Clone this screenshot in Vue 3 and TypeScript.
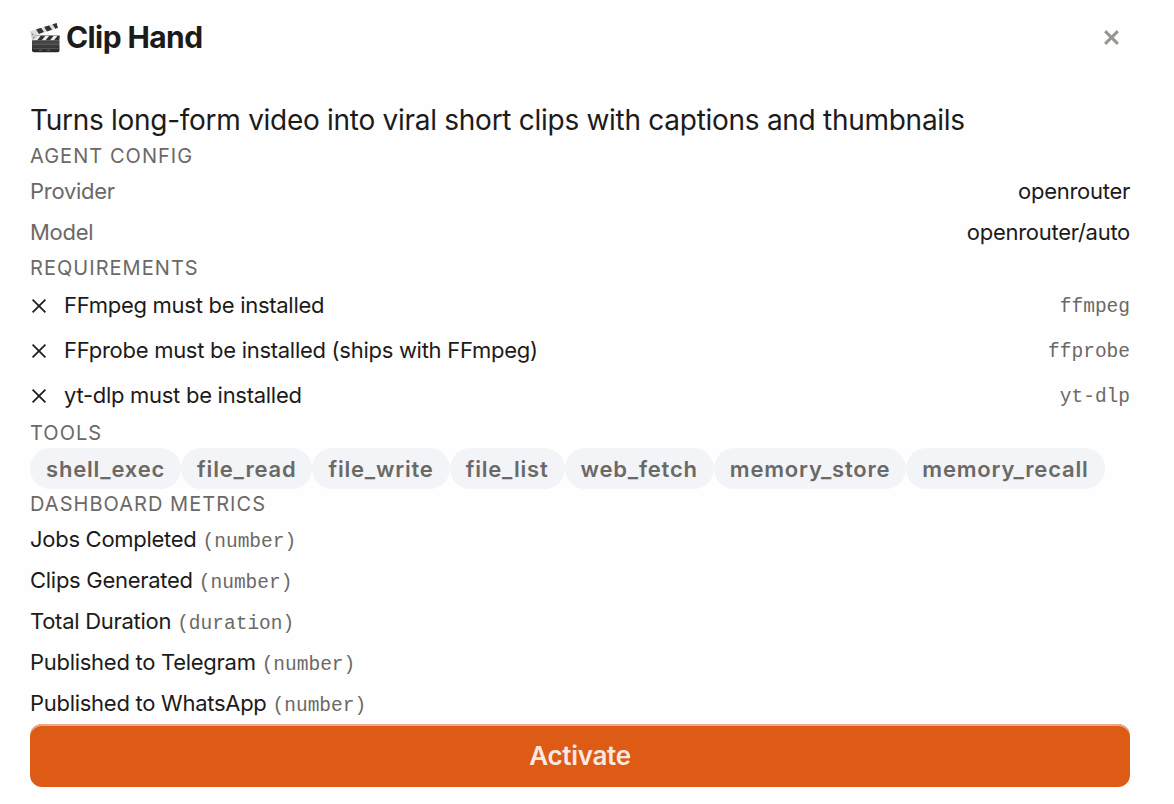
<script setup lang="ts">
interface ConfigRow { label: string; value: string }
interface Requirement { label: string; binary: string }
interface Metric { label: string; format: string }

const config: ConfigRow[] = [
  { label: 'Provider', value: 'openrouter' },
  { label: 'Model', value: 'openrouter/auto' },
]

const requirements: Requirement[] = [
  { label: 'FFmpeg must be installed', binary: 'ffmpeg' },
  { label: 'FFprobe must be installed (ships with FFmpeg)', binary: 'ffprobe' },
  { label: 'yt-dlp must be installed', binary: 'yt-dlp' },
]

const tools: string[] = [
  'shell_exec', 'file_read', 'file_write', 'file_list',
  'web_fetch', 'memory_store', 'memory_recall',
]

const metrics: Metric[] = [
  { label: 'Jobs Completed', format: 'number' },
  { label: 'Clips Generated', format: 'number' },
  { label: 'Total Duration', format: 'duration' },
  { label: 'Published to Telegram', format: 'number' },
  { label: 'Published to WhatsApp', format: 'number' },
]
</script>

<template>
  <main class="modal">
    <header class="header">
      <h1 class="title">
        <svg class="clapper" viewBox="1 0 32 32" aria-hidden="true">
          <defs>
            <linearGradient id="slate" x1="0" y1="0" x2="0" y2="1">
              <stop offset="0" stop-color="#2b2b2b" />
              <stop offset="0.45" stop-color="#484848" />
              <stop offset="1" stop-color="#252525" />
            </linearGradient>
            <clipPath id="arm"><path d="M1.2 9.3 27.6 1l1.3 5L3.2 14.4z" /></clipPath>
            <clipPath id="bar"><path d="M3 13.5h27.5v5H3z" /></clipPath>
          </defs>
          <path d="M3 13.5h27.5v14.7q0 2-2 2H5q-2 0-2-2z" fill="url(#slate)" />
          <path d="M4 22.3h25.5M4 26.5h25.5" stroke="#6c6c6c" stroke-width=".6" />
          <path d="M10 28.3h3M18 28.3h3" stroke="#929292" stroke-width=".6" />
          <g clip-path="url(#arm)">
            <path d="M0 0h32v16H0z" fill="#dedede" />
            <path d="m6.5 6.5 5-1.5 3.5 5-5 2zM14.8 4.2l4.8-1.5 3.5 5-5 2zM23 1.5l5-1.5 3.5 5-5 2z" fill="#333" />
          </g>
          <g clip-path="url(#bar)">
            <path d="M3 13.5h28v5H3z" fill="#ededed" />
            <path d="m8 18.5 4-5h4.5l-4 5zM16.4 18.5l4-5h4.5l-4 5zM24.8 18.5l4-5h4.5l-4 5z" fill="#303030" />
          </g>
          <path d="m1.2 9.3 2 9.2 5-3.3-2.6-3z" fill="#c9c9c9" />
          <circle cx="3.6" cy="12.2" r=".6" fill="#777" /><circle cx="4.8" cy="15.7" r=".6" fill="#777" />
        </svg>
        <span>Clip Hand</span>
      </h1>
      <button class="close" aria-label="Close">
        <svg viewBox="0 0 16 16"><path d="m2 2 12 12M14 2 2 14" /></svg>
      </button>
    </header>

    <p class="description">Turns long-form video into viral short clips with captions and thumbnails</p>

    <h2 class="label">AGENT CONFIG</h2>
    <div v-for="row in config" :key="row.label" class="row">
      <span class="muted">{{ row.label }}</span>
      <span>{{ row.value }}</span>
    </div>

    <h2 class="label">REQUIREMENTS</h2>
    <div v-for="item in requirements" :key="item.binary" class="row requirement">
      <svg class="cross" viewBox="0 0 18 18"><path d="m2.6 2.6 12.8 12.8M15.4 2.6 2.6 15.4" /></svg>
      <span class="grow">{{ item.label }}</span>
      <code class="code">{{ item.binary }}</code>
    </div>

    <h2 class="label">TOOLS</h2>
    <div class="tools">
      <span v-for="tool in tools" :key="tool" class="tool">{{ tool }}</span>
    </div>

    <h2 class="label">DASHBOARD METRICS</h2>
    <div v-for="metric in metrics" :key="metric.label" class="metric">
      <span>{{ metric.label }}</span>
      <code class="code">({{ metric.format }})</code>
    </div>

    <button class="activate">Activate</button>
  </main>
</template>

<style>
html, body { background: #fefefe; overflow: hidden; }
</style>

<style scoped>
.modal {
  box-sizing: border-box;
  width: 1174px;
  height: 804px;
  padding: 0 44px 0 30px;
  background: #fefefe;
  color: #1c1b1a;
  font-family: Inter, sans-serif;
  font-size: 22px;
  line-height: 33px;
  letter-spacing: -0.28px;
  white-space: nowrap;
}
.header {
  display: flex;
  align-items: center;
  justify-content: space-between;
  height: 75px;
  margin-bottom: 24px;
}
.title {
  display: flex;
  align-items: center;
  gap: 4px;
  margin: 0;
  font-size: 30px;
  font-weight: 700;
  letter-spacing: -0.6px;
}
.clapper { width: 32px; height: 32px; }
.close {
  display: flex;
  margin-right: 10px;
  padding: 0;
  border: 0;
  background: none;
}
.close svg { width: 17px; height: 17px; fill: none; stroke: #979691; stroke-width: 2.8; }
.description { margin: 0; font-size: 28px; line-height: 42px; }
.label {
  margin: 0;
  color: #6b6966;
  font-size: 20px;
  font-weight: 400;
  line-height: 30px;
  letter-spacing: 1.04px;
}
.row { display: flex; align-items: center; justify-content: space-between; height: 41px; }
.muted { color: #6b6966; }
.requirement { height: 45px; }
.cross { width: 18px; height: 18px; margin-right: 16px; fill: none; stroke: #1c1b1a; stroke-width: 1.7; }
.grow { flex: 1; }
.code {
  color: #6b6966;
  font-family: "Liberation Mono", monospace;
  font-size: 19.5px;
  letter-spacing: 0;
}
.requirement .code { padding-top: 3px; }
.tools { display: flex; gap: 0; }
.tool {
  box-sizing: border-box;
  height: 41px;
  padding: 0 16px;
  border-radius: 21px;
  background: #f3f4f8;
  color: #6b6966;
  font-weight: 600;
  line-height: 42px;
  letter-spacing: 0.8px;
}
.metric { display: flex; align-items: baseline; gap: 6px; height: 37px; padding-top: 4px; }
.activate {
  display: block;
  width: 100%;
  height: 63px;
  padding: 0;
  border: 0;
  border-radius: 12px;
  background: #de5b16;
  box-shadow: inset 0 2px 0 #eba988;
  color: #f9e9e0;
  font: 600 26px/63px Inter, sans-serif;
  letter-spacing: -0.28px;
}
</style>
